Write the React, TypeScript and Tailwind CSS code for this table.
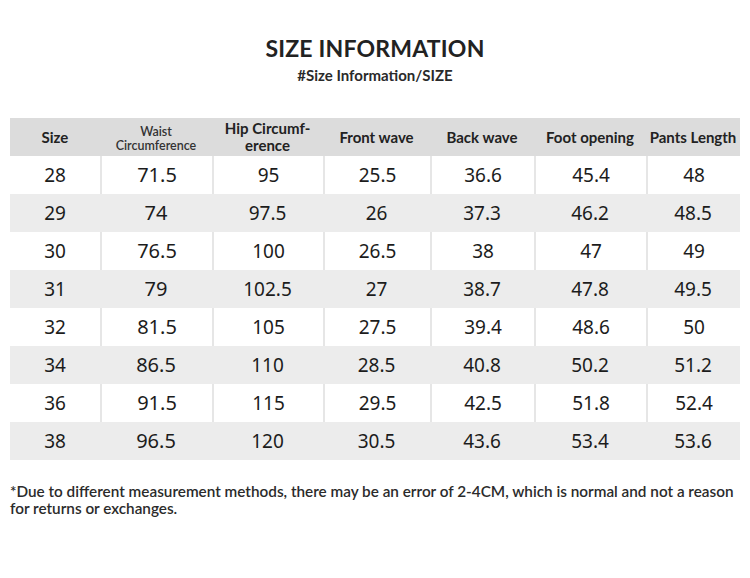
const rows = [
  ["28", "71.5", "95", "25.5", "36.6", "45.4", "48"],
  ["29", "74", "97.5", "26", "37.3", "46.2", "48.5"],
  ["30", "76.5", "100", "26.5", "38", "47", "49"],
  ["31", "79", "102.5", "27", "38.7", "47.8", "49.5"],
  ["32", "81.5", "105", "27.5", "39.4", "48.6", "50"],
  ["34", "86.5", "110", "28.5", "40.8", "50.2", "51.2"],
  ["36", "91.5", "115", "29.5", "42.5", "51.8", "52.4"],
  ["38", "96.5", "120", "30.5", "43.6", "53.4", "53.6"],
];

const cols = "grid grid-cols-[90px_112px_111px_107px_104px_112px_94px]";

export default function App() {
  return (
    <div className="w-[750px] h-[578px] bg-white font-['Lato',sans-serif] text-[#222]">
      {/* title */}
      <div className="pt-[33px] text-center">
        <h1 className="text-[23px] font-bold leading-[30px] tracking-[0.2px]">SIZE INFORMATION</h1>
        <p className="mt-[3px] text-[15px] font-bold leading-[18px] text-[#2a2a2a]">#Size Information/SIZE</p>
      </div>

      <div className="mt-[34px] ml-[10px] w-[730px]">
        {/* header row */}
        <div className={`${cols} h-[38px] bg-[#dcdcdc] items-center text-center`}>
          <div className="text-[15px] font-bold">Size</div>
          <div className="text-[12.5px] leading-[14px] font-semibold text-[#333] pt-[3px]">
            Waist
            <br />
            Circumference
          </div>
          <div className="text-[15px] font-bold leading-[17px] whitespace-nowrap">
            Hip Circumf-
            <br />
            erence
          </div>
          <div className="text-[15px] font-bold">Front wave</div>
          <div className="text-[15px] font-bold">Back wave</div>
          <div className="text-[15px] font-bold whitespace-nowrap">Foot opening</div>
          <div className="text-[15px] font-bold whitespace-nowrap">Pants Length</div>
        </div>

        {rows.map((r, i) => (
          <div
            key={r[0]}
            className={`${cols} h-[38px] items-stretch text-center font-['Noto_Sans',sans-serif] text-[#1c1c1c] ${
              i % 2 === 0 ? "bg-white" : "bg-[#ececec]"
            }`}
          >
            {r.map((v, j) => (
              <div
                key={j}
                className={`flex items-center justify-center ${
                  i % 2 === 0 && j > 0 ? "border-l-2 border-[#e6e6e6]" : ""
                } ${j === 1 ? "text-[20px]" : "text-[19px]"}`}
              >
                {v}
              </div>
            ))}
          </div>
        ))}
      </div>

      <p className="mt-[23px] ml-[10px] w-[732px] text-[15.3px] leading-[17px] font-semibold text-[#2b2b2b]">
        *Due to different measurement methods, there may be an error of 2-4CM, which is normal and not a reason for returns or exchanges.
      </p>
    </div>
  );
}
